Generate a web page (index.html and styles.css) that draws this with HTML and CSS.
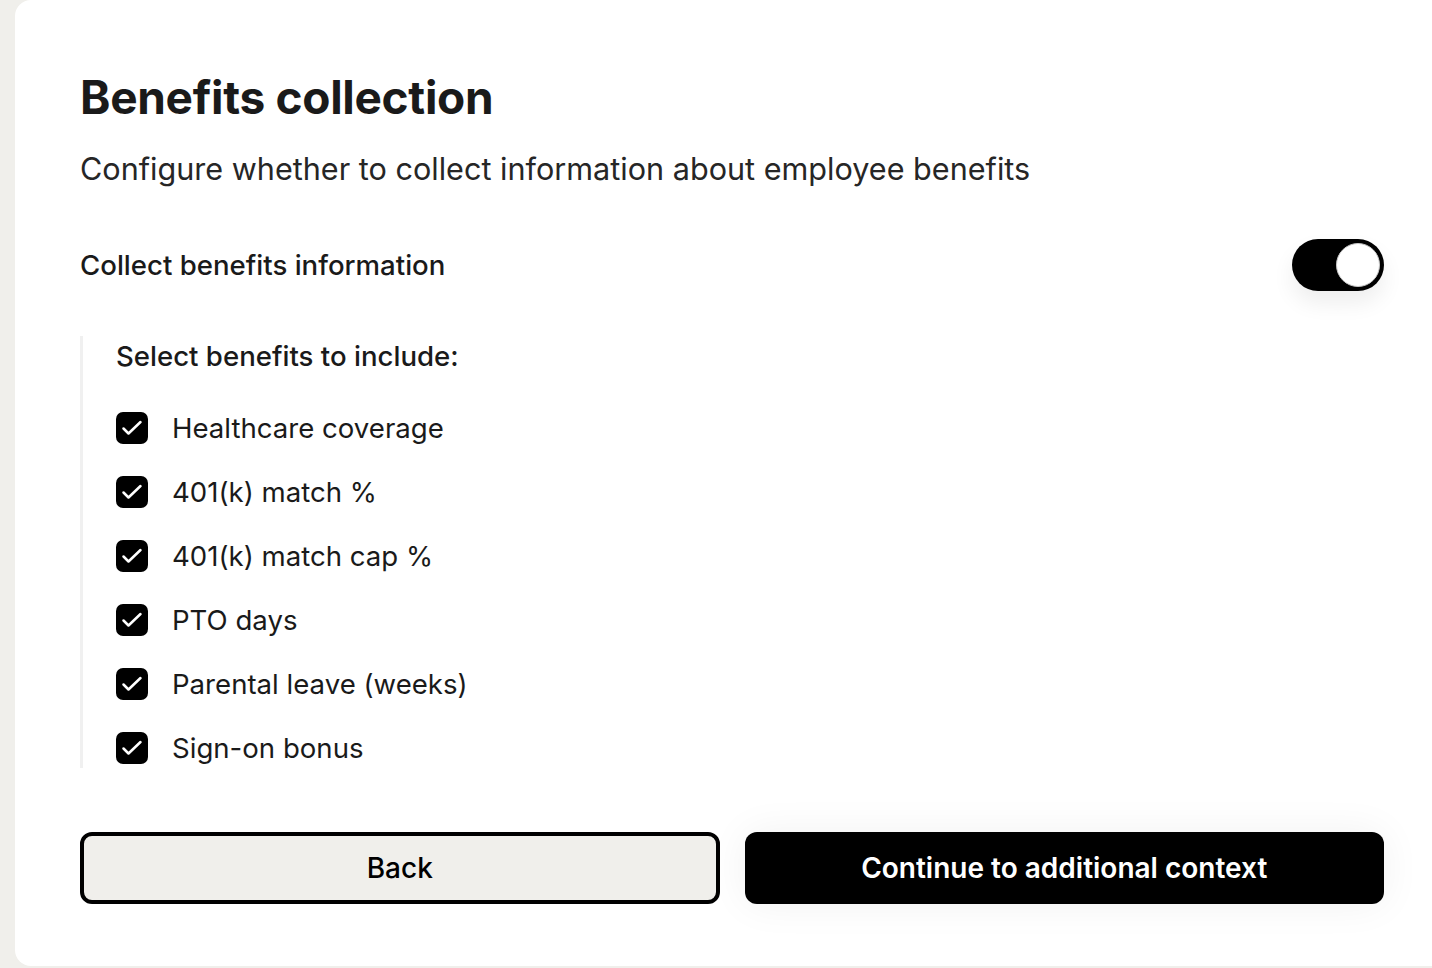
FILE: index.html
```html
<!DOCTYPE html>
<html lang="en">
<head>
<meta charset="utf-8">
<title>Benefits collection</title>
<link rel="stylesheet" href="styles.css">
</head>
<body>
<main class="card">
  <h1 class="title">Benefits collection</h1>
  <p class="subtitle">Configure whether to collect information about employee benefits</p>

  <div class="toggle-row">
    <span class="toggle-label">Collect benefits information</span>
    <span class="toggle on" role="switch" aria-checked="true"><span class="knob"></span></span>
  </div>

  <section class="panel">
    <div class="panel-title">Select benefits to include:</div>
    <ul class="options">
      <li class="option"><span class="box"><svg viewBox="0 0 32 32" width="32" height="32"><path d="M7.5 16.5l5 5L24.5 10" fill="none" stroke="#fff" stroke-width="2.5" stroke-linecap="round" stroke-linejoin="round"/></svg></span><span class="opt-label">Healthcare coverage</span></li>
      <li class="option"><span class="box"><svg viewBox="0 0 32 32" width="32" height="32"><path d="M7.5 16.5l5 5L24.5 10" fill="none" stroke="#fff" stroke-width="2.5" stroke-linecap="round" stroke-linejoin="round"/></svg></span><span class="opt-label">401(k) match %</span></li>
      <li class="option"><span class="box"><svg viewBox="0 0 32 32" width="32" height="32"><path d="M7.5 16.5l5 5L24.5 10" fill="none" stroke="#fff" stroke-width="2.5" stroke-linecap="round" stroke-linejoin="round"/></svg></span><span class="opt-label">401(k) match cap %</span></li>
      <li class="option"><span class="box"><svg viewBox="0 0 32 32" width="32" height="32"><path d="M7.5 16.5l5 5L24.5 10" fill="none" stroke="#fff" stroke-width="2.5" stroke-linecap="round" stroke-linejoin="round"/></svg></span><span class="opt-label">PTO days</span></li>
      <li class="option"><span class="box"><svg viewBox="0 0 32 32" width="32" height="32"><path d="M7.5 16.5l5 5L24.5 10" fill="none" stroke="#fff" stroke-width="2.5" stroke-linecap="round" stroke-linejoin="round"/></svg></span><span class="opt-label">Parental leave (weeks)</span></li>
      <li class="option"><span class="box"><svg viewBox="0 0 32 32" width="32" height="32"><path d="M7.5 16.5l5 5L24.5 10" fill="none" stroke="#fff" stroke-width="2.5" stroke-linecap="round" stroke-linejoin="round"/></svg></span><span class="opt-label">Sign-on bonus</span></li>
    </ul>
  </section>

  <div class="actions">
    <button class="btn btn-back" type="button">Back</button>
    <button class="btn btn-primary" type="button">Continue to additional context</button>
  </div>
</main>
</body>
</html>
```
FILE: styles.css
```css
* { box-sizing: border-box; }

html, body {
  margin: 0;
  padding: 0;
}

body {
  background: #f0efeb;
  font-family: Inter, "Noto Sans", "Liberation Sans", sans-serif;
  color: #1a1a1a;
  overflow: hidden;
  width: 1432px;
  height: 968px;
}

.card {
  margin-left: 15px;
  width: 1434px;
  height: 966px;
  background: #ffffff;
  border-radius: 16px;
  padding: 71px 65px 0 65px;
  display: flex;
  flex-direction: column;
}

.title {
  margin: 0;
  font-size: 46px;
  line-height: 53px;
  font-weight: 700;
  letter-spacing: -0.3px;
  color: #1a1a1a;
}

.subtitle {
  margin: 27px 0 0 0;
  font-size: 30.6px;
  line-height: 36px;
  font-weight: 400;
  color: #262626;
}

.toggle-row {
  margin-top: 52px;
  height: 52px;
  display: flex;
  align-items: center;
  justify-content: space-between;
}

.toggle-label {
  font-size: 27.6px;
  font-weight: 500;
  color: #1a1a1a;
}

.toggle {
  position: relative;
  width: 92px;
  height: 52px;
  border-radius: 26px;
  background: #000;
  box-shadow: 0 12px 22px rgba(0, 0, 0, 0.07);
  display: flex;
  align-items: center;
  justify-content: flex-end;
  padding: 0 4px;
}

.knob {
  width: 44px;
  height: 44px;
  border-radius: 50%;
  background: #fff;
  border: 1px solid #c8c8c8;
}

.panel {
  margin-top: 45px;
  border-left: 3px solid #f0f0f0;
  padding-left: 33px;
}

.panel-title {
  font-size: 27.6px;
  line-height: 40px;
  font-weight: 500;
  color: #1a1a1a;
}

.options {
  list-style: none;
  margin: 32px 0 0 0;
  padding: 0;
  display: flex;
  flex-direction: column;
  gap: 24px;
}

.option {
  height: 40px;
  display: flex;
  align-items: center;
  gap: 24px;
}

.box {
  width: 32px;
  height: 32px;
  border-radius: 7px;
  background: #000;
  display: flex;
  align-items: center;
  justify-content: center;
  flex: none;
}

.box svg { display: block; }

.opt-label {
  font-size: 27.6px;
  font-weight: 400;
  color: #1a1a1a;
}

.actions {
  margin-top: 64px;
  display: grid;
  grid-template-columns: 1fr 1fr;
  gap: 25px;
}

.btn {
  height: 72px;
  border-radius: 12px;
  font-family: Inter, "Noto Sans", "Liberation Sans", sans-serif;
  font-size: 28px;
  cursor: pointer;
}

.btn-back {
  background: #f0efeb;
  border: 4px solid #000;
  color: #000;
  font-weight: 500;
}

.btn-primary {
  background: #000;
  border: none;
  color: #fff;
  font-weight: 600;
  box-shadow: 0 0 40px rgba(0, 0, 0, 0.06);
}
```
